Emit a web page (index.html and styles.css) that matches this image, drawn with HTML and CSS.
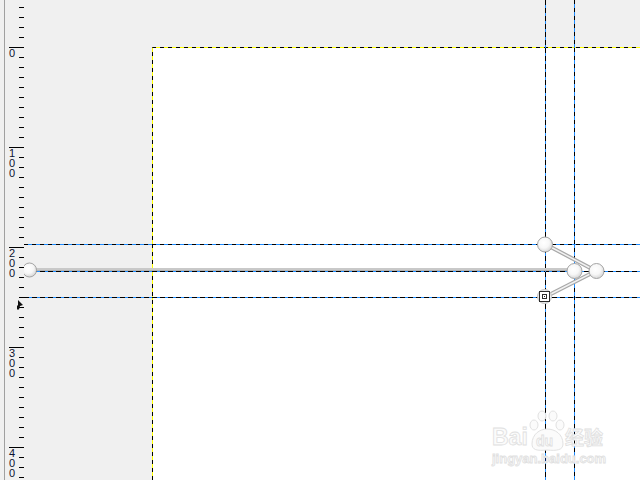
FILE: index.html
```html
<!DOCTYPE html>
<html lang="zh-CN">

<head>
    <meta charset="UTF-8">
    <title>箭头编辑</title>
    <link rel="stylesheet" href="styles.css">
</head>

<body>
    <div class="window">
        <!-- 垂直标尺 -->
        <aside class="ruler">
            <div class="ruler-lead"></div>
            <div class="ruler-major"><span class="ruler-num">0</span></div>
            <div class="ruler-major"><span class="ruler-num">100</span></div>
            <div class="ruler-major"><span class="ruler-num">200</span></div>
            <div class="ruler-major"><span class="ruler-num">300</span></div>
            <div class="ruler-major"><span class="ruler-num">400</span></div>
            <svg class="ruler-pointer" width="8" height="12" viewBox="0 0 8 12">
                <path d="M2 1 L7 6 L4 7 L3 10.5 L1 10.5 L1 6.5 L2 6.5 Z" />
            </svg>
        </aside>

        <!-- 画布 -->
        <main class="canvas">
            <svg class="drawing" width="616" height="480" viewBox="24 0 616 480">
                <defs>
                    <radialGradient id="knob" cx="42%" cy="38%" r="65%">
                        <stop offset="0" stop-color="#ffffff" />
                        <stop offset="0.55" stop-color="#f7f7f7" />
                        <stop offset="1" stop-color="#d4d4d4" />
                    </radialGradient>
                </defs>

                <!-- 页面 -->
                <rect class="page" x="152" y="47" width="488" height="433" />
                <path class="page-edge" d="M152.5 480 V47.5 H640" />
                <path class="page-edge-dash" d="M152.5 480 V47.5 H640" />

                <!-- 辅助线 -->
                <line class="guide" x1="24" y1="244.5" x2="640" y2="244.5" />
                <line class="guide-dash light" x1="24" y1="244.5" x2="640" y2="244.5" />
                <line class="guide" x1="24" y1="271.5" x2="640" y2="271.5" />
                <line class="guide-dash" x1="24" y1="271.5" x2="640" y2="271.5" />
                <line class="guide" x1="24" y1="297.5" x2="640" y2="297.5" />
                <line class="guide-dash" x1="24" y1="297.5" x2="640" y2="297.5" />
                <line class="guide" x1="545.5" y1="0" x2="545.5" y2="480" />
                <line class="guide-dash" x1="545.5" y1="0" x2="545.5" y2="480" />
                <line class="guide" x1="574.5" y1="0" x2="574.5" y2="480" />
                <line class="guide-dash light" x1="574.5" y1="0" x2="574.5" y2="480" />

                <!-- 箭头 -->
                <line class="shaft" x1="29" y1="269.5" x2="574" y2="269.5" />
                <line class="shaft-core" x1="29" y1="269" x2="574" y2="269" />
                <path class="head" d="M545 244 L596 271 L545 297" />
                <path class="head-core" d="M545 244 L596 271 L545 297" />

                <!-- 节点 -->
                <circle class="knob" cx="29.5" cy="270" r="7" />
                <circle class="knob" cx="545" cy="244.5" r="7.5" />
                <circle class="knob" cx="574.5" cy="271" r="7.5" />
                <circle class="knob" cx="596.5" cy="271" r="7.5" />
                <circle class="knob-faint" cx="544.5" cy="296.5" r="7" />
                <rect class="handle" x="539.5" y="291.5" width="10" height="10" />
                <rect class="handle" x="542.5" y="294.5" width="4" height="4" />
                <rect class="handle-dot" x="544" y="296" width="1" height="1" />
            </svg>

            <!-- 水印 -->
            <svg class="watermark" width="125" height="64" viewBox="0 0 125 64">
                <g class="paw">
                    <ellipse cx="44" cy="20" rx="4" ry="5" />
                    <ellipse cx="52" cy="11" rx="4" ry="5" />
                    <ellipse cx="63" cy="11" rx="4" ry="5" />
                    <ellipse cx="70" cy="20" rx="4" ry="5" />
                    <path d="M42 39 C42 29 50 24 57 24 C65 24 73 29 73 39 C73 45 67 46 57 45 C47 46 42 45 42 39 Z" />
                </g>
                <text class="wm-big" x="2" y="40">Bai</text>
                <text class="wm-du" x="46" y="41">du</text>
                <text class="wm-cn" x="75" y="40">经验</text>
                <text class="wm-url" x="2" y="58">jingyan.baidu.com</text>
            </svg>
        </main>
    </div>
</body>

</html>
```

FILE: styles.css
```css
body {
    margin: 0;
    background-color: #f0f0f0;
    font-family: "Liberation Sans", Arial, sans-serif;
}

.window {
    display: flex;
    width: 640px;
    height: 480px;
    overflow: hidden;
}

/* 标尺 */
.ruler {
    position: relative;
    flex: 0 0 24px;
    height: 480px;
    overflow: hidden;
    background:
        linear-gradient(#a0a0a0, #a0a0a0) 4px 0 / 1px 100% no-repeat,
        repeating-linear-gradient(to bottom, #000 0 1px, transparent 1px 10px) 19px 7px / 5px 100% repeat-y,
        #f0f0f0;
}

.ruler-lead {
    height: 47px;
}

.ruler-major {
    height: 100px;
    box-sizing: border-box;
    padding: 1px 0 0 9px;
    background: linear-gradient(#000, #000) 9px 0 / 15px 1px no-repeat;
}

.ruler-num {
    display: block;
    width: 7px;
    word-break: break-all;
    font-size: 11px;
    line-height: 10px;
    color: #0c1230;
}

.ruler-pointer {
    position: absolute;
    left: 16px;
    top: 299px;
    fill: #111;
}

/* 画布 */
.canvas {
    position: relative;
    flex: 1;
    height: 480px;
    background-color: #f0f0f0;
}

.drawing {
    display: block;
}

.page {
    fill: #fff;
}

.page-edge {
    fill: none;
    stroke: #ffff00;
    stroke-width: 1;
}

.page-edge-dash {
    fill: none;
    stroke: #000;
    stroke-width: 1;
    stroke-dasharray: 4 4;
}

.guide {
    stroke: #1e8cff;
    stroke-width: 1;
}

.guide-dash {
    stroke: #000;
    stroke-width: 1;
    stroke-dasharray: 5 3;
}

.guide-dash.light {
    stroke-dasharray: 4 4;
}

.shaft {
    stroke: #b4b4b4;
    stroke-width: 3;
}

.shaft-core {
    stroke: #dedede;
    stroke-width: 1;
}

.head {
    fill: none;
    stroke: #a8a8a8;
    stroke-width: 4;
}

.head-core {
    fill: none;
    stroke: #f2f2f2;
    stroke-width: 1.5;
}

.knob {
    fill: url(#knob);
    stroke: #a4a4a4;
    stroke-width: 1;
}

.knob-faint {
    fill: #ececec;
    stroke: #c4c4c4;
    stroke-width: 1;
}

.handle {
    fill: #fff;
    stroke: #2a2a2a;
    stroke-width: 1;
}

.handle-dot {
    fill: #2a2a2a;
}

/* 水印 */
.watermark {
    position: absolute;
    left: 466px;
    top: 405px;
}

.paw {
    fill: #fbfbfb;
    stroke: #e2e2e2;
    stroke-width: 1;
}

.watermark text {
    fill: #fbfbfb;
    stroke: #e0e0e0;
    stroke-width: 0.8;
    font-family: "Liberation Sans", Arial, "Noto Sans CJK SC", sans-serif;
    font-weight: bold;
}

.wm-big {
    font-size: 23px;
}

.wm-du {
    font-size: 14px;
}

.wm-cn {
    font-size: 19px;
}

.wm-url {
    font-size: 13px;
    font-weight: normal;
}
```
